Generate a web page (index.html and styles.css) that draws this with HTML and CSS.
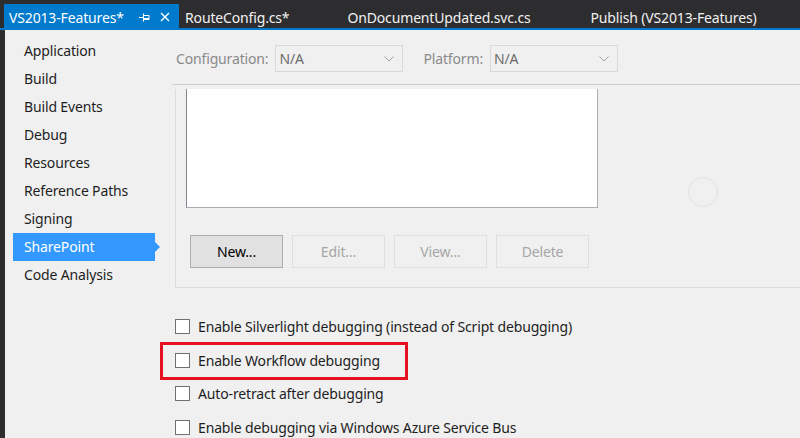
FILE: index.html
```html
<!DOCTYPE html>
<html lang="en">
<head>
  <meta charset="UTF-8">
  <title>VS2013-Features</title>
  <link rel="stylesheet" href="styles.css">
</head>
<body>

<div class="tabs">
  <div class="tab active">
    <span>VS2013-Features*</span>
    <svg class="pin" width="11" height="10" viewBox="0 0 11 10">
      <path d="M0 5.5H4M4.5 1.5V9.5M4.5 3.5H10V7.5H4.5M4.5 6.5H10" stroke="#fff" stroke-width="1" fill="none"/>
    </svg>
    <svg class="close" width="10" height="10" viewBox="0 0 10 10">
      <path d="M1 1L9 9M9 1L1 9" stroke="#fff" stroke-width="1.4"/>
    </svg>
  </div>
  <div class="tab t2">RouteConfig.cs*</div>
  <div class="tab t3">OnDocumentUpdated.svc.cs</div>
  <div class="tab t4">Publish (VS2013-Features)</div>
</div>

<div class="main">
  <ul class="nav">
    <li>Application</li>
    <li>Build</li>
    <li>Build Events</li>
    <li>Debug</li>
    <li>Resources</li>
    <li>Reference Paths</li>
    <li>Signing</li>
    <li class="selected">SharePoint</li>
    <li>Code Analysis</li>
  </ul>

  <div class="content">
    <div class="toolbar">
      <span class="label">Configuration:</span>
      <div class="select"><span>N/A</span>
        <svg width="10" height="6" viewBox="0 0 10 6"><path d="M0.5 0.5L5 5L9.5 0.5" stroke="#a0a0a0" fill="none"/></svg>
      </div>
      <span class="label plat">Platform:</span>
      <div class="select"><span>N/A</span>
        <svg width="10" height="6" viewBox="0 0 10 6"><path d="M0.5 0.5L5 5L9.5 0.5" stroke="#a0a0a0" fill="none"/></svg>
      </div>
    </div>

    <div class="scroll">
      <div class="group">
        <div class="listbox"></div>
        <div class="buttons">
          <button class="btn">New...</button>
          <button class="btn" disabled>Edit...</button>
          <button class="btn" disabled>View...</button>
          <button class="btn" disabled>Delete</button>
        </div>
      </div>

      <div class="checks">
        <label class="check"><span class="box"></span>Enable Silverlight debugging (instead of Script debugging)</label>
        <label class="check"><span class="box"></span>Enable Workflow debugging</label>
        <label class="check"><span class="box"></span>Auto-retract after debugging</label>
        <label class="check"><span class="box"></span>Enable debugging via Windows Azure Service Bus</label>
      </div>
    </div>
  </div>

  <div class="highlight"></div>
  <div class="cursor"></div>
</div>

</body>
</html>
```

FILE: styles.css
```css
body {
  margin: 0;
  background: #2d2d30;
  font-family: "Noto Sans", "Open Sans", sans-serif;
  font-size: 14px;
  letter-spacing: -0.15px;
  overflow: hidden;
  height: 438px;
}

/* tab bar */
.tabs {
  display: flex;
  height: 24px;
  padding-top: 4px;
  border-bottom: 2px solid #007acc;
  color: #f1f1f1;
  font-size: 14px;
}

.tab {
  display: flex;
  align-items: center;
  box-sizing: border-box;
  height: 24px;
  padding-top: 2px;
}

.tab.active {
  background: #007acc;
  color: #fff;
  margin-left: 4px;
  padding-left: 5px;
  width: 175px;
}

.tab.active .pin {
  margin-left: 15px;
}

.tab.active .close {
  margin-left: 10px;
}

.t2 { margin-left: 6px; }
.t3 { margin-left: 58px; }
.t4 { margin-left: 60px; }

/* main panel */
.main {
  position: relative;
  display: flex;
  margin-left: 5px;
  height: 408px;
  overflow: hidden;
  background: #f0f0f0;
  color: #1e1e1e;
}

.nav {
  list-style: none;
  margin: 0;
  padding: 7px 0 0 8px;
  width: 159px;
  flex-shrink: 0;
}

.nav li {
  position: relative;
  height: 28px;
  line-height: 28px;
  padding-left: 11px;
  width: 131px;
}

.nav li.selected {
  background: #3399ff;
  color: #fff;
}

.nav li.selected::after {
  content: "";
  position: absolute;
  right: -5px;
  top: 9px;
  border-left: 5px solid #3399ff;
  border-top: 5px solid transparent;
  border-bottom: 5px solid transparent;
}

.content {
  flex: 1;
}

.toolbar {
  display: flex;
  align-items: center;
  height: 27px;
  padding: 15px 0 12px 4px;
  border-bottom: 1px solid #cccccc;
  color: #8a8a8a;
}

.select {
  display: flex;
  align-items: center;
  justify-content: space-between;
  box-sizing: border-box;
  width: 128px;
  height: 27px;
  margin-left: 7px;
  padding: 0 8px 0 3px;
  border: 1px solid #d9d9d9;
  color: #6d6d6d;
}

.label.plat {
  margin-left: 20px;
}

.scroll {
  padding-top: 4px;
}

.group {
  margin-left: 3px;
  border-left: 1px solid #dcdcdc;
  border-bottom: 1px solid #dcdcdc;
  padding: 0 0 19px 10px;
}

.listbox {
  width: 410px;
  height: 118px;
  background: #fff;
  border-left: 1px solid #828790;
  border-right: 1px solid #abadb3;
  border-bottom: 1px solid #abadb3;
}

.buttons {
  display: flex;
  gap: 9px;
  margin-top: 27px;
  margin-left: 4px;
}

.btn {
  width: 93px;
  height: 33px;
  font-family: inherit;
  font-size: 14px;
  letter-spacing: inherit;
  color: #000;
  background: #e1e1e1;
  border: 1px solid #adadad;
}

.btn:disabled {
  color: #a6a6a6;
  background: #f0f0f0;
  border-color: #dedede;
}

.checks {
  display: flex;
  flex-direction: column;
  padding: 22px 0 0 3px;
}

.check {
  display: flex;
  align-items: center;
  height: 33.5px;
}

.box {
  width: 13px;
  height: 13px;
  border: 1px solid #707070;
  background: #fff;
  margin-right: 8px;
}

/* annotation over the screenshot */
.highlight {
  position: absolute;
  left: 155px;
  top: 312px;
  width: 242px;
  height: 32px;
  border: 3px solid #e81123;
}

.cursor {
  position: absolute;
  left: 683px;
  top: 147px;
  width: 28px;
  height: 28px;
  border: 1px solid #e2e2e2;
  border-radius: 50%;
}
```
